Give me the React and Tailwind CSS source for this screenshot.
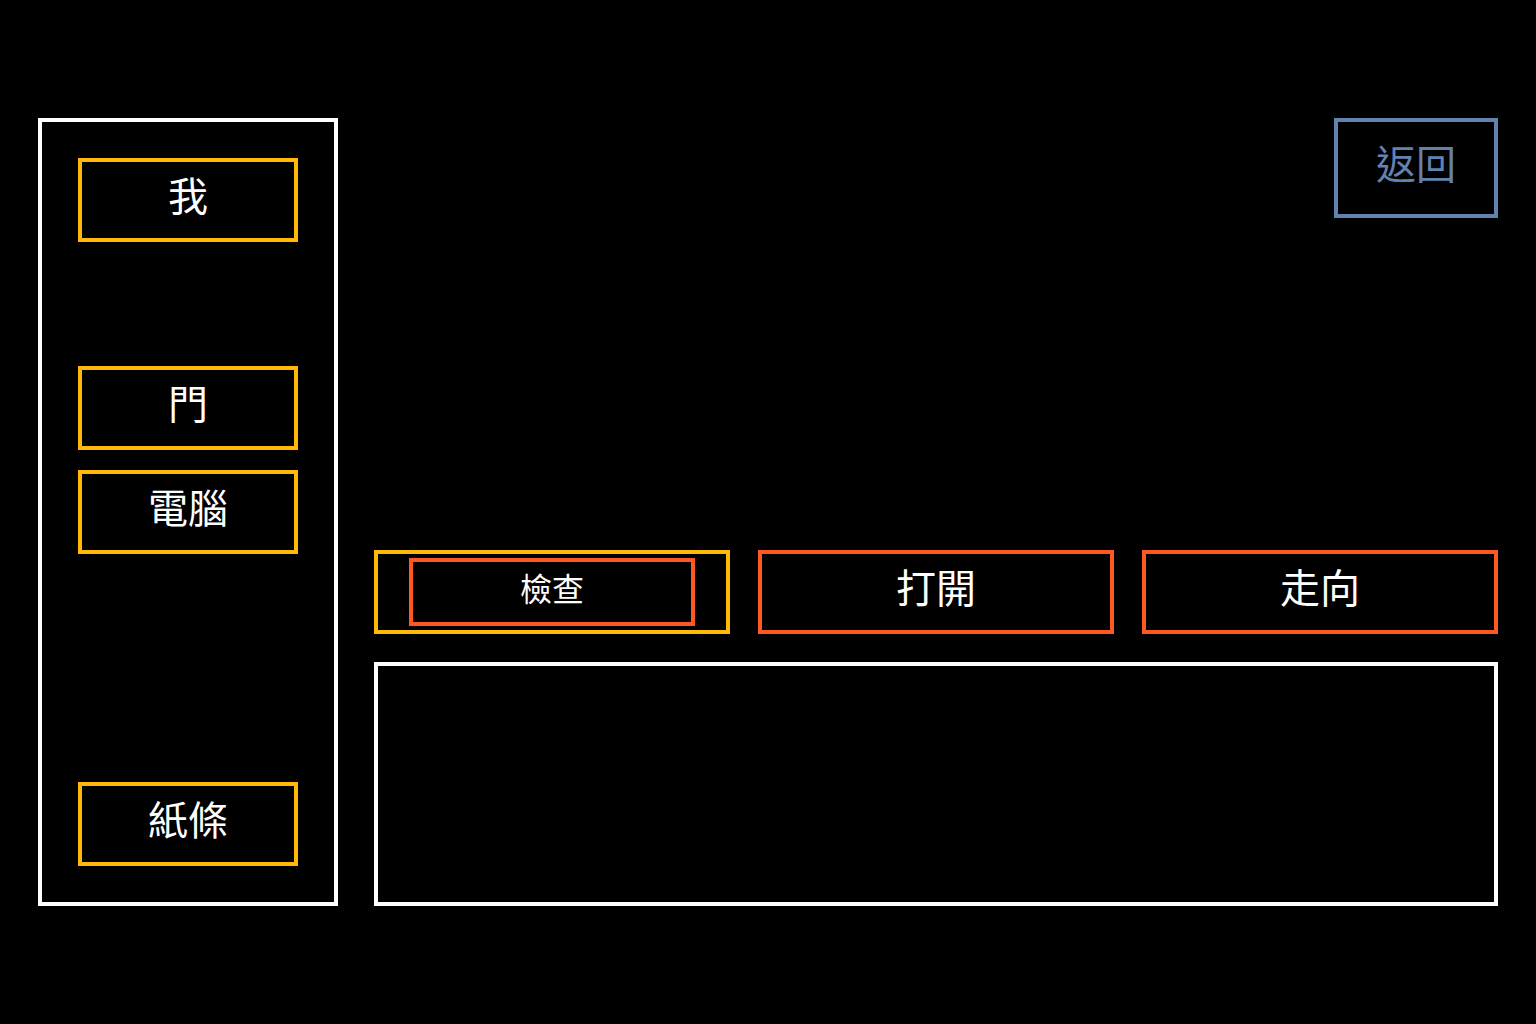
const textButton = "border-4 pb-3 text-[40px] leading-[60px]";

const objects = [
  { label: "我", gap: "" },
  { label: "門", gap: "mt-[124px]" },
  { label: "電腦", gap: "mt-5" },
  { label: "紙條", gap: "mt-[228px]" },
];

const actions = ["打開", "走向"];

export default function App() {
  return (
    <div className="flex min-h-screen items-center bg-black px-[38px] font-['Noto_Sans_CJK_TC',sans-serif] text-white">
      <div className="flex w-full items-stretch gap-9">
        <nav aria-label="物件" className="w-[300px] shrink-0 border-4 border-white p-9">
          {objects.map((o) => (
            <div key={o.label} className={o.gap}>
              <button type="button" className={`${textButton} h-[84px] w-full border-[#ffbb08]`}>
                {o.label}
              </button>
            </div>
          ))}
        </nav>
        <main className="flex grow flex-col">
          <button type="button" className={`${textButton} h-[100px] w-[164px] self-end border-[#6283b0] text-[#6283b0]`}>
            返回
          </button>
          <div className="mt-auto grid grid-cols-3 gap-7">
            <div className="flex h-[84px] items-center justify-center border-4 border-[#ffbb08]">
              <button type="button" className="h-[68px] w-[286px] border-4 border-[#ff5722] pb-2.5 text-[32px] leading-[48px]">
                檢查
              </button>
            </div>
            {actions.map((label) => (
              <button key={label} type="button" className={`${textButton} h-[84px] border-[#ff5722]`}>
                {label}
              </button>
            ))}
          </div>
          <section aria-label="訊息" className="mt-7 h-[244px] border-4 border-white" />
        </main>
      </div>
    </div>
  );
}
